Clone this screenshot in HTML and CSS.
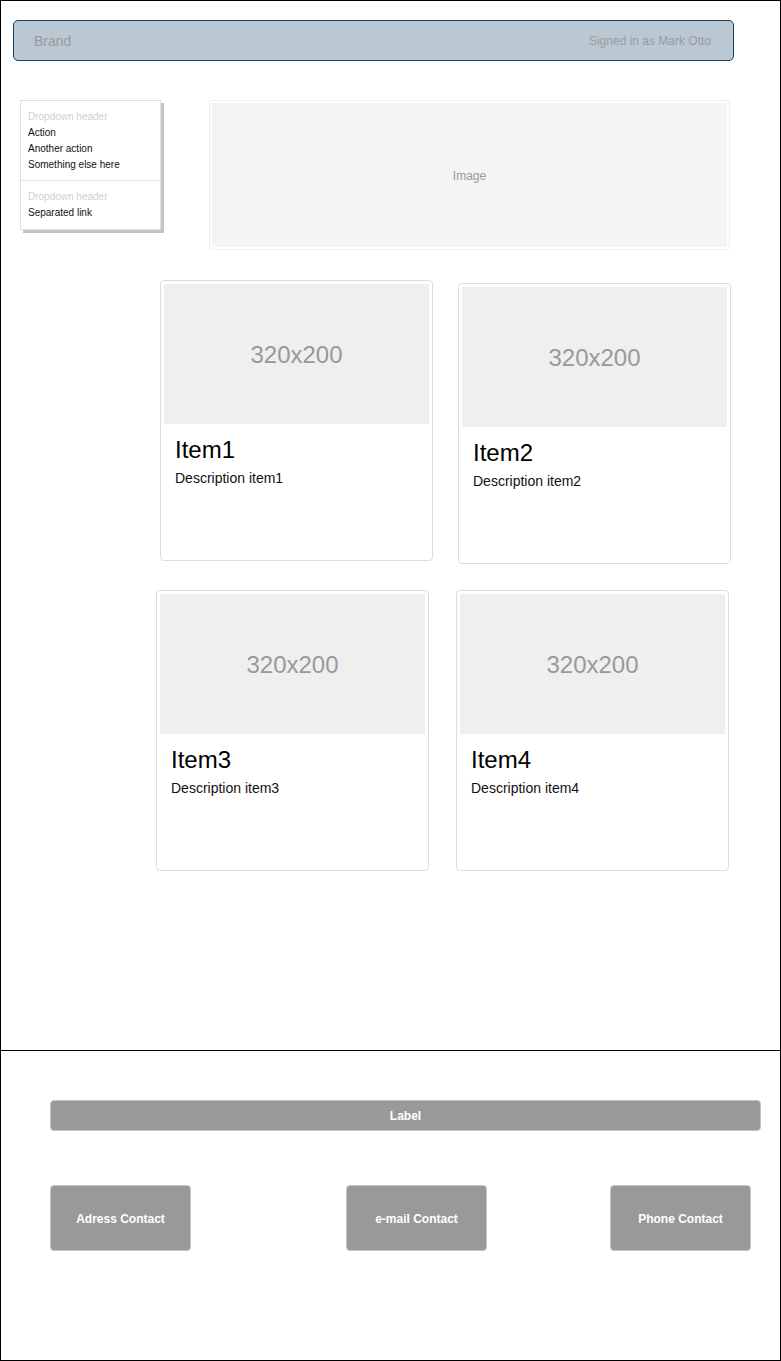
FILE: index.html
```html
<!DOCTYPE html>
<html>
<head>
<meta charset="utf-8">
<link rel="stylesheet" href="styles.css">
</head>
<body>
<div class="page">
  <section class="main">
    <nav class="navbar">
      <span class="brand">Brand</span>
      <span class="signed">Signed in as Mark Otto</span>
    </nav>
    <div class="top-row">
      <div class="dropdown">
        <div class="dd-header">Dropdown header</div>
        <div class="dd-item">Action</div>
        <div class="dd-item">Another action</div>
        <div class="dd-item">Something else here</div>
        <div class="dd-divider"></div>
        <div class="dd-header">Dropdown header</div>
        <div class="dd-item">Separated link</div>
      </div>
      <div class="hero">
        <div class="hero-inner">Image</div>
      </div>
    </div>
    <div class="card-row row1">
      <div class="card c1">
        <div class="thumb">320x200</div>
        <div class="card-title">Item1</div>
        <div class="card-desc">Description item1</div>
      </div>
      <div class="card c2">
        <div class="thumb">320x200</div>
        <div class="card-title">Item2</div>
        <div class="card-desc">Description item2</div>
      </div>
    </div>
    <div class="card-row row2">
      <div class="card c3">
        <div class="thumb">320x200</div>
        <div class="card-title">Item3</div>
        <div class="card-desc">Description item3</div>
      </div>
      <div class="card c4">
        <div class="thumb">320x200</div>
        <div class="card-title">Item4</div>
        <div class="card-desc">Description item4</div>
      </div>
    </div>
  </section>
  <footer class="footer">
    <div class="label-bar">Label</div>
    <div class="contacts">
      <div class="contact b1">Adress Contact</div>
      <div class="contact b2">e-mail Contact</div>
      <div class="contact b3">Phone Contact</div>
    </div>
  </footer>
</div>
</body>
</html>
```

FILE: styles.css
```css
* { box-sizing: border-box; }
html, body { margin: 0; padding: 0; background: #fff; }
body { font-family: "Liberation Sans", Arial, sans-serif; }

.page { width: 781px; }

.main {
  height: 1051px;
  border: 1px solid #000;
  padding-top: 19px;
}

.navbar {
  margin-left: 12px;
  width: 721px;
  height: 41px;
  background: #bac8d3;
  border: 1px solid #1f3f5a;
  border-radius: 5px;
  display: flex;
  align-items: center;
  justify-content: space-between;
  padding: 1px 22px 0 20px;
  color: #9a9a9a;
}
.brand { font-size: 14px; }
.signed { font-size: 12px; }

.top-row {
  display: flex;
  align-items: flex-start;
  margin-top: 39px;
}

.dropdown {
  margin-left: 19px;
  width: 141px;
  height: 130px;
  border: 1px solid #e0e0e0;
  box-shadow: 3px 3px 0 #c4c4c4;
  padding-top: 8px;
  font-size: 10px;
  background: #fff;
}
.dd-header, .dd-item {
  height: 16px;
  line-height: 16px;
  padding-left: 7px;
  white-space: nowrap;
}
.dd-header { color: #cfcfcf; }
.dd-item { color: #111; }
.dd-divider {
  height: 1px;
  background: #e2e2e2;
  margin: 7px 0 8px;
}

.hero {
  margin-left: 48px;
  width: 521px;
  height: 150px;
  border: 1px solid #eeeeee;
  border-radius: 4px;
  padding: 2px;
  background: #fff;
}
.hero-inner {
  height: 100%;
  background: #f4f4f4;
  border-radius: 2px;
  display: flex;
  align-items: center;
  justify-content: center;
  padding-top: 2px;
  color: #999;
  font-size: 12px;
}

.card-row {
  display: flex;
  align-items: flex-start;
}
.row1 { margin-top: 30px; }
.row2 { margin-top: 26px; }

.card {
  width: 273px;
  height: 281px;
  border: 1px solid #dddddd;
  border-radius: 4px;
  padding: 3px;
  background: #fff;
}
.c1 { margin-left: 159px; }
.c2 { margin-left: 25px; margin-top: 3px; }
.c3 { margin-left: 155px; }
.c4 { margin-left: 27px; }

.thumb {
  height: 140px;
  background: #efefef;
  display: flex;
  align-items: center;
  justify-content: center;
  padding-top: 1px;
  color: #999;
  font-size: 24px;
}
.card-title {
  margin-top: 12px;
  padding-left: 11px;
  font-size: 24px;
  line-height: 28px;
  color: #000;
}
.card-desc {
  margin-top: 6px;
  padding-left: 11px;
  font-size: 14px;
  line-height: 17px;
  color: #111;
}

.footer {
  height: 310px;
  border: 1px solid #000;
  border-top: none;
  padding-top: 49px;
}
.label-bar {
  margin-left: 49px;
  width: 711px;
  height: 31px;
  background: #999;
  border: 1px solid #c4c4c4;
  border-radius: 4px;
  color: #fff;
  font-weight: bold;
  font-size: 12px;
  display: flex;
  align-items: center;
  justify-content: center;
}
.contacts {
  display: flex;
  margin-top: 54px;
}
.contact {
  width: 141px;
  height: 66px;
  background: #999;
  border: 1px solid #c4c4c4;
  border-radius: 4px;
  color: #fff;
  font-weight: bold;
  font-size: 12px;
  display: flex;
  align-items: center;
  justify-content: center;
  padding-top: 1px;
}
.b1 { margin-left: 49px; }
.b2 { margin-left: 155px; }
.b3 { margin-left: 123px; }
```
